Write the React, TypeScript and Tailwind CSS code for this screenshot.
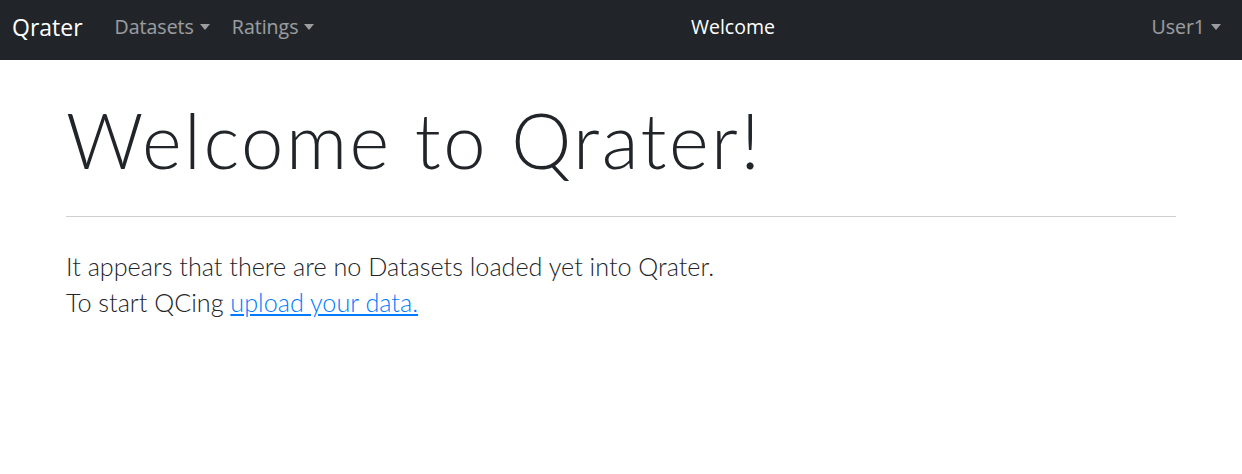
export default function App() {
  return (
    <div className="min-h-[474px] bg-white" style={{ fontFamily: '"Open Sans", "Noto Sans", sans-serif' }}>
      <nav className="flex h-[60px] items-center bg-[#212529] pb-[6px] pl-3 pr-[21px] text-[19.5px]">
        <a href="#" className="mr-[32px] text-[23px] text-white">Qrater</a>
        <button className="flex items-center text-white/55">
          Datasets
          <span className="ml-[6px] inline-block border-x-[5px] border-t-[6px] border-x-transparent border-t-current" />
        </button>
        <button className="ml-[22px] flex items-center text-white/55">
          Ratings
          <span className="ml-[6px] inline-block border-x-[5px] border-t-[6px] border-x-transparent border-t-current" />
        </button>
        <div className="flex-1 text-center text-white">Welcome</div>
        <button className="flex items-center text-white/55">
          User1
          <span className="ml-[6px] inline-block border-x-[5px] border-t-[6px] border-x-transparent border-t-current" />
        </button>
      </nav>

      <main className="mx-auto max-w-[1140px] px-[15px]">
        <h1
          className="pt-[34px] text-[76px] font-light leading-[1.2] tracking-[2.5px] text-[#212529]"
          style={{ fontFamily: 'Lato, sans-serif' }}
        >
          Welcome to Qrater!
        </h1>
        <hr className="mt-[31px] border-[#cfcfcf]" />
        <div
          className="mt-[31px] text-[25.2px] font-light leading-[36px] text-[#212529]"
          style={{ fontFamily: 'Lato, sans-serif' }}
        >
          <p>It appears that there are no Datasets loaded yet into Qrater.</p>
          <p>
            To start QCing{' '}
            <a href="#" className="text-[#007bff] underline">upload your data.</a>
          </p>
        </div>
      </main>
    </div>
  )
}
